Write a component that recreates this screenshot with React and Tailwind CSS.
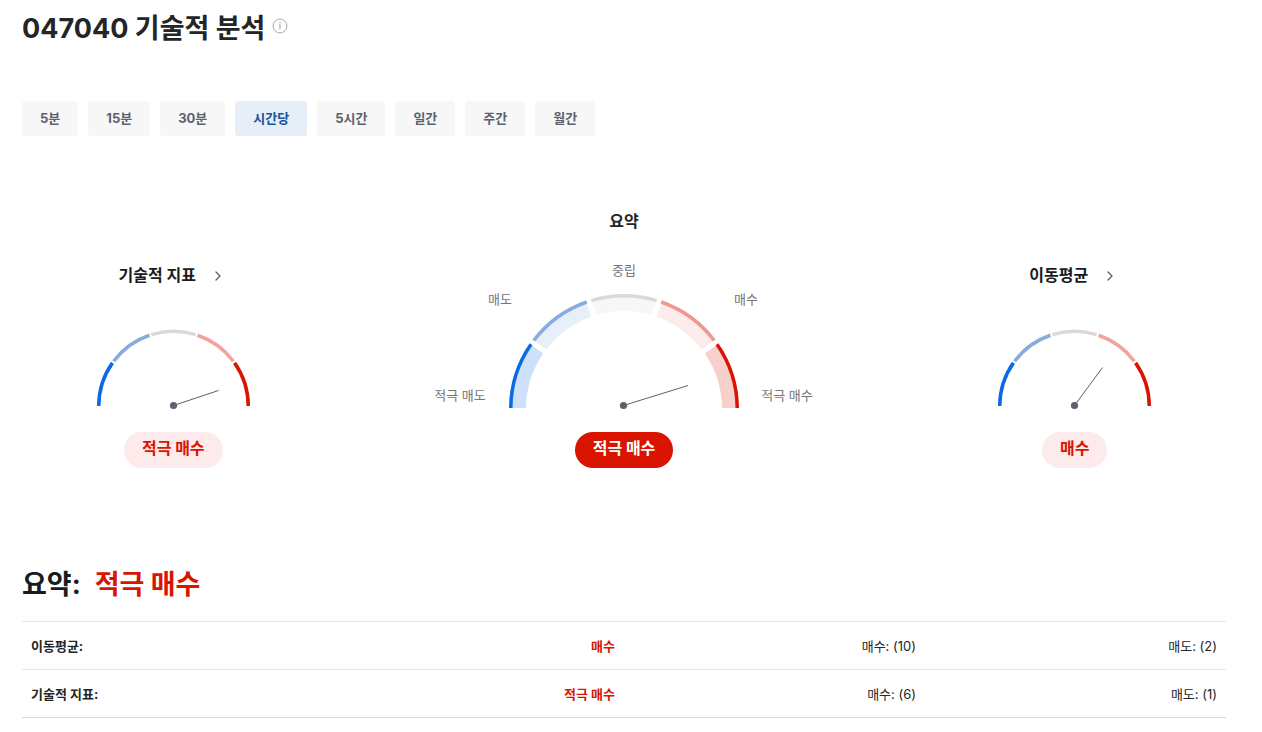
import { ChevronRight } from "lucide-react";

const PERIODS = ["5분", "15분", "30분", "시간당", "5시간", "일간", "주간", "월간"];

const SEGMENTS = [
  { rim: "#0a69e5", fill: "#cee0fa" },
  { rim: "#88ace0", fill: "#e7eff9" },
  { rim: "#d9d9d9", fill: "#f7f7f7" },
  { rim: "#f1978f", fill: "#fcebea" },
  { rim: "#d91400", fill: "#f7d0cc" },
];

const SMALL_RIMS = ["#0a69e5", "#88ace0", "#d9d9d9", "#f3a39c", "#d91400"];

const ROWS = [
  { name: "이동평균:", verdict: "매수", buy: "매수: (10)", sell: "매도: (2)" },
  { name: "기술적 지표:", verdict: "적극 매수", buy: "매수: (6)", sell: "매도: (1)" },
];

// Annular band for one fifth of the half circle, with parallel-sided gaps.
function band(cx, cy, outer, inner, index, gap) {
  const point = (r, boundary, side) => {
    const edge = boundary === 0 || boundary === 5;
    const shift = edge ? 0 : Math.asin(gap / 2 / r) * side;
    const a = Math.PI - (boundary * Math.PI) / 5 - shift;
    return `${(cx + r * Math.cos(a)).toFixed(2)} ${(cy - r * Math.sin(a)).toFixed(2)}`;
  };
  return [
    `M${point(outer, index, 1)}`,
    `A${outer} ${outer} 0 0 1 ${point(outer, index + 1, -1)}`,
    `L${point(inner, index + 1, -1)}`,
    `A${inner} ${inner} 0 0 0 ${point(inner, index, 1)}Z`,
  ].join("");
}

function Needle({ cx, cy, x, y }) {
  return (
    <g>
      <line x1={cx} y1={cy} x2={x} y2={y} stroke="#5b616e" strokeWidth="1" />
      <circle cx={cx} cy={cy} r="3.6" fill="#5b616e" />
    </g>
  );
}

function SmallGauge({ label, tip }) {
  return (
    <svg width="153" height="82" viewBox="0 0 153 82" role="img" aria-label={label}>
      {SMALL_RIMS.map((rim, i) => (
        <path key={rim} d={band(76.5, 77, 76.5, 73, i, 2)} fill={rim} />
      ))}
      <Needle cx={76.5} cy={76.5} x={tip[0]} y={tip[1]} />
    </svg>
  );
}

function SummaryGauge() {
  return (
    <svg
      width="400"
      height="150"
      viewBox="0 0 400 150"
      role="img"
      aria-label="요약"
      className="text-[13px]"
    >
      <svg width="400" height="148">
        {SEGMENTS.map((s, i) => (
          <g key={s.rim}>
            <path d={band(200, 149, 113, 98, i, 5.4)} fill={s.fill} />
            <path d={band(200, 149, 115, 111.5, i, 4.6)} fill={s.rim} />
          </g>
        ))}
      </svg>
      <Needle cx={199.5} cy={145.5} x={264} y={125.5} />
      <g fill="#757575" textAnchor="middle">
        <text x="36" y="140">적극 매도</text>
        <text x="76" y="44">매도</text>
        <text x="200" y="15">중립</text>
        <text x="322" y="44">매수</text>
        <text x="363" y="140">적극 매수</text>
      </g>
    </svg>
  );
}

function Pill({ strong, children }) {
  const tone = strong ? "bg-[#d91400] text-white" : "bg-[#fcebea] text-[#d91400]";
  return (
    <div className={`flex h-9 items-center rounded-full px-[18px] pb-1 text-base font-bold ${tone}`}>
      {children}
    </div>
  );
}

function SideGauge({ title, verdict, tip }) {
  return (
    <section className="flex flex-col items-center">
      <h2 className="mb-[42px] text-base leading-6 font-bold text-[#181c21]">
        <a href="#details" className="flex items-center gap-3.5 pr-0.5">
          {title}
          <ChevronRight size={16} strokeWidth={2} className="mt-0.5 text-[#5b616e]" />
        </a>
      </h2>
      <SmallGauge label={title} tip={tip} />
      <div className="mt-[21px]">
        <Pill>{verdict}</Pill>
      </div>
    </section>
  );
}

export default function App() {
  return (
    <main className="bg-white pr-9 pb-3.5 pl-[22px] font-['Inter','Noto_Sans_CJK_KR',sans-serif] text-[#232526]">
      <header className="flex items-start gap-[7px] pt-[9px]">
        <h1 className="text-[27px] leading-10 font-bold">047040 기술적 분석</h1>
        <button type="button" aria-label="정보" className="mt-[9px]">
          <svg width="16" height="16" viewBox="0 0 16 16" fill="none" stroke="#a5a8ad">
            <circle cx="8" cy="8" r="6.9" strokeWidth="1" />
            <path d="M7 7H8v4.6" strokeWidth="1.1" />
            <circle cx="8" cy="4.8" r="0.8" fill="#a5a8ad" stroke="none" />
          </svg>
        </button>
      </header>

      <nav className="mt-[52px] flex gap-2.5">
        {PERIODS.map((p) => (
          <button
            key={p}
            type="button"
            aria-pressed={p === "시간당"}
            className={`h-[35px] rounded-[3px] px-[18px] text-[13px] font-bold ${
              p === "시간당" ? "bg-[#e6eef7] text-[#1256a0]" : "bg-[#f7f7f7] text-[#5b616e]"
            }`}
          >
            {p}
          </button>
        ))}
      </nav>

      <div className="mt-[73px] grid grid-cols-[1fr_2fr_1fr] items-end px-px">
        <SideGauge title="기술적 지표" verdict="적극 매수" tip={[121.5, 61.5]} />
        <section className="flex flex-col items-center">
          <h2 className="mb-[27px] text-base leading-6 font-bold">요약</h2>
          <SummaryGauge />
          <div className="mt-[22px]">
            <Pill strong>적극 매수</Pill>
          </div>
        </section>
        <SideGauge title="이동평균" verdict="매수" tip={[104.5, 38.5]} />
      </div>

      <h2 className="mt-[97px] flex gap-3.5 text-[27px] leading-10 font-bold text-[#181c21]">
        <span>요약:</span>
        <span className="text-[#d91400]">적극 매수</span>
      </h2>

      <table className="mt-4 w-full table-fixed border-collapse border-y border-[#dbdbdb] text-[13px] leading-5">
        <tbody>
          {ROWS.map((r) => (
            <tr key={r.name} className="h-12 border-t border-[#e6e6e6]">
              <th scope="row" className="px-[9px] text-left font-bold">{r.name}</th>
              <td className="px-[9px] text-right font-bold text-[#d91400]">{r.verdict}</td>
              <td className="px-[9px] text-right">{r.buy}</td>
              <td className="px-[9px] text-right">{r.sell}</td>
            </tr>
          ))}
        </tbody>
      </table>
    </main>
  );
}
